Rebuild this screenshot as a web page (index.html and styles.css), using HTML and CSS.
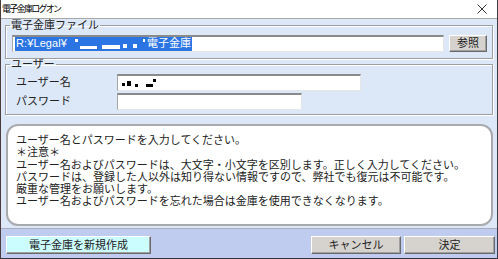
FILE: index.html
```html
<!DOCTYPE html>
<html lang="ja">
<head>
<meta charset="utf-8">
<title>電子金庫ログオン</title>
<link rel="stylesheet" href="styles.css">
</head>
<body>
<div class="window">
  <div class="titlebar">
    <span class="title">電子金庫ログオン</span>
    <svg class="close" width="10" height="10" viewBox="0 0 10 10"><path d="M0.5 0.5L9.5 9.5M9.5 0.5L0.5 9.5" stroke="#333" stroke-width="1"/></svg>
  </div>
  <div class="content">
    <fieldset class="group group-file">
      <legend>電子金庫ファイル</legend>
      <div class="file-row">
        <div class="field field-path">
          <span class="sel"><span class="latin">R:¥Legal¥</span><span class="rd rd1"></span><span class="rd rd2"></span><span class="rd rd3"></span><span class="rd rd4"></span><span class="rd rd5"></span><span class="rd rd6"></span><span class="jp-path">電子金庫</span></span>
        </div>
        <div class="btn btn-browse">参照</div>
      </div>
    </fieldset>
    <fieldset class="group group-user">
      <legend>ユーザー</legend>
      <div class="form-grid">
        <div class="label">ユーザー名</div>
        <div class="field field-user"><span class="bk bk1"></span><span class="bk bk2"></span><span class="bk bk3"></span><span class="bk bk4"></span><span class="bk bk5"></span></div>
        <div class="label">パスワード</div>
        <div class="field field-pass"></div>
      </div>
    </fieldset>
    <div class="message">
      <p>ユーザー名とパスワードを入力してください。</p>
      <p>＊注意＊</p>
      <p>ユーザー名およびパスワードは、大文字・小文字を区別します。正しく入力してください。</p>
      <p>パスワードは、登録した人以外は知り得ない情報ですので、弊社でも復元は不可能です。</p>
      <p>厳重な管理をお願いします。</p>
      <p>ユーザー名およびパスワードを忘れた場合は金庫を使用できなくなります。</p>
    </div>
  </div>
  <div class="bottombar">
    <div class="btn btn-new">電子金庫を新規作成</div>
    <div class="btn-group">
      <div class="btn btn-cancel">キャンセル</div>
      <div class="btn btn-ok">決定</div>
    </div>
  </div>
</div>
</body>
</html>
```
FILE: styles.css
```css
* { box-sizing: border-box; }
html, body { margin: 0; padding: 0; background: #3a2a2a; }
body {
  font-family: "Liberation Sans", "Noto Sans CJK JP", sans-serif;
  font-size: 11px;
  color: #1a1a1a;
}
.window {
  width: 498px;
  height: 259px;
  display: flex;
  flex-direction: column;
  border-left: 1px solid #4a3c3c;
  border-right: 1px solid #3c3c44;
  border-bottom: 1px solid #34343c;
  background: #dce7f8;
  overflow: hidden;
}
.titlebar {
  height: 19px;
  flex: none;
  background: #ffffff;
  border-bottom: 1px solid #a8a8a8;
  display: flex;
  align-items: center;
  justify-content: space-between;
  padding: 0 10px 0 1px;
}
.title {
  font-size: 9px;
  line-height: 12px;
  letter-spacing: -1.7px;
  color: #000;
}
.close { display: block; margin-top: 0; }
.content {
  flex: 1;
  padding: 0 4px 1px 4px;
  display: flex;
  flex-direction: column;
}
.group {
  margin: 0;
  padding: 2px 5px 6px 6px;
  border: 1px solid #9d9ea2;
  box-shadow: inset 1px 1px 0 #ffffff, 1px 1px 0 #ffffff;
  min-width: 0;
}
.group legend {
  font-size: 11px;
  line-height: 13px;
  padding: 0 1px;
  margin-left: -2px;
  color: #222;
}
.group-user {
  margin-top: -1px;
  padding: 3px 5px 4px 6px;
}
.file-row {
  display: flex;
  align-items: center;
  justify-content: space-between;
}
.field {
  background: #ffffff;
  height: 17px;
  border-top: 2px solid #8a8a8a;
  border-left: 1px solid #a6a6a6;
  border-right: 1px solid #e6e6e6;
  border-bottom: 1px solid #e6e6e6;
  display: flex;
  align-items: center;
}
.field-path { width: 432px; padding-left: 2px; }
.sel {
  display: flex;
  align-items: center;
  height: 14px;
  background: #2a74e4;
  color: #ffffff;
  padding: 0 1px;
}
.latin {
  font-family: "Liberation Sans", sans-serif;
  font-size: 11px;
  line-height: 13px;
  letter-spacing: 0.1px;
}
.jp-path { font-size: 11px; line-height: 13px; }
.rd { display: inline-block; background: #ffffff; }
.rd1 { width: 3px; height: 3px; margin-left: 8px; align-self: flex-start; margin-top: 2px; }
.rd2 { width: 17px; height: 3px; margin-left: 2px; align-self: flex-end; margin-bottom: 2px; }
.rd3 { width: 18px; height: 4px; margin-left: 5px; align-self: flex-end; margin-bottom: 2px; }
.rd4 { width: 4px; height: 4px; margin-left: 3px; align-self: flex-end; margin-bottom: 3px; }
.rd5 { width: 4px; height: 4px; margin-left: 6px; align-self: flex-end; margin-bottom: 3px; }
.rd6 { width: 2px; height: 3px; margin-left: 6px; margin-right: 2px; align-self: flex-start; margin-top: 2px; }
.btn {
  background: #d6d3ce;
  border-top: 1px solid #ffffff;
  border-left: 1px solid #ffffff;
  border-right: 1px solid #6a6a6a;
  border-bottom: 1px solid #6a6a6a;
  box-shadow: inset -1px -1px 0 #a0a0a0;
  display: flex;
  align-items: center;
  justify-content: center;
  font-size: 11px;
  line-height: 13px;
  color: #222;
}
.btn-browse { width: 38px; height: 17px; margin-top: 1px; }
.form-grid {
  display: grid;
  grid-template-columns: 101px auto;
  row-gap: 2px;
  margin-left: 4px;
  align-items: center;
}
.label { font-size: 11px; line-height: 17px; color: #222; }
.field-user { width: 244px; padding-left: 3px; }
.field-pass { width: 185px; }
.bk { display: inline-block; background: #000; }
.bk1 { width: 3px; height: 3px; margin-left: 1px; margin-top: 3px; }
.bk2 { width: 4px; height: 5px; margin-left: 2px; }
.bk3 { width: 3px; height: 3px; margin-left: 4px; margin-top: 4px; }
.bk4 { width: 7px; height: 3px; margin-left: 8px; margin-top: 4px; }
.bk5 { width: 3px; height: 3px; margin-left: 0; margin-top: -5px; }
.message {
  margin-top: 9px;
  margin-left: 1px;
  height: 102px;
  background: #ffffff;
  border: 2px solid #a9aaae;
  border-radius: 12px;
  padding: 8px 8px;
}
.message p {
  margin: 0;
  font-size: 11px;
  line-height: 12.3px;
  white-space: nowrap;
  color: #222;
}
.bottombar {
  height: 30px;
  flex: none;
  border-top: 1px solid #a9acba;
  background: #bfcbef;
  display: flex;
  justify-content: space-between;
  align-items: flex-start;
  padding: 7px 2px 0 5px;
}
.btn-new { width: 145px; height: 18px; background: #ccfdfe; }
.btn-group { display: flex; gap: 3px; }
.btn-cancel { width: 90px; height: 18px; }
.btn-ok { width: 91px; height: 18px; }
```
